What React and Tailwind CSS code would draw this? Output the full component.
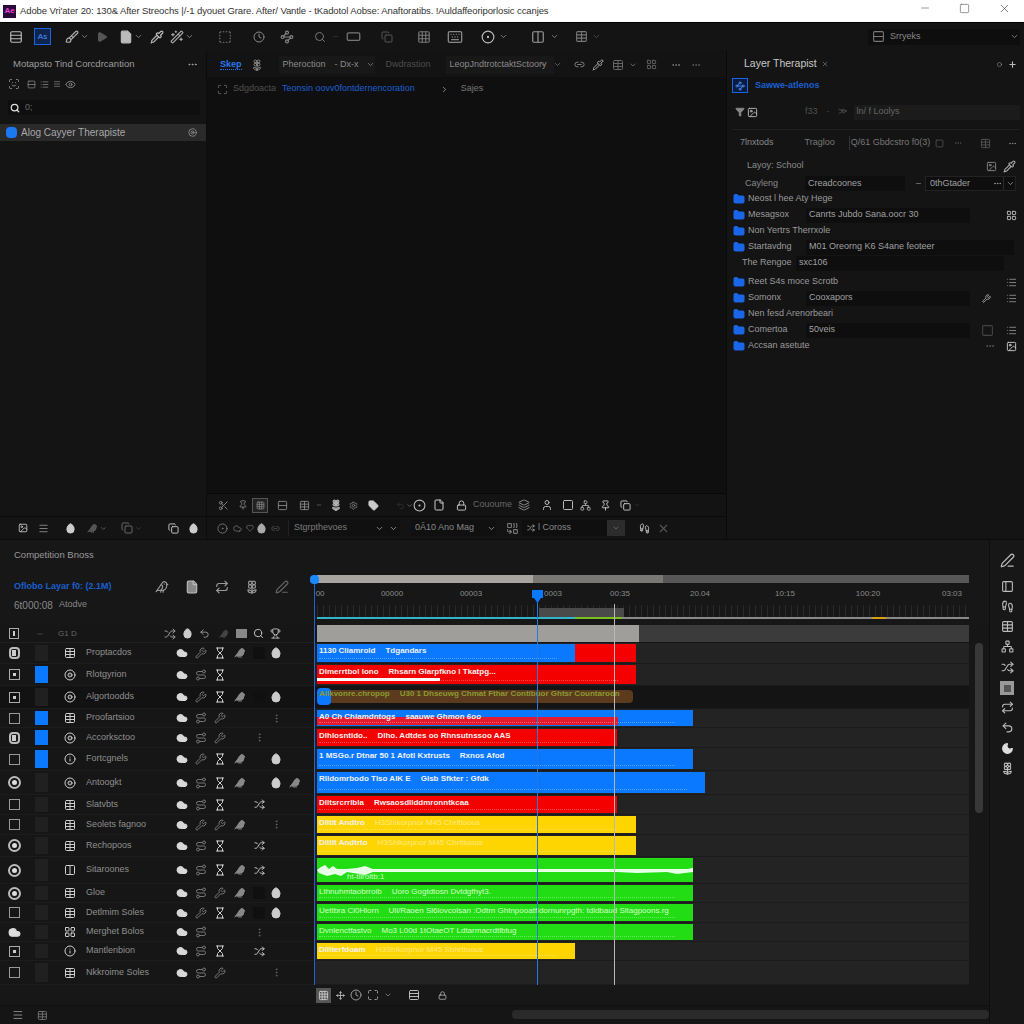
import React from 'react';
import {
  Menu, Rows3, Brush, ChevronDown, Play, File, Pipette, Wand2, SquareDashed, Clock, Waypoints, Search, RectangleHorizontal, Copy, Grid3x3,
  Keyboard, CircleDot, Columns2, Table, Minus, Square, X, MoreHorizontal, ScanFace, Rows2, List, Eye, Filter, Image, ChevronRight, LayoutGrid,
  Maximize, Network, Settings, Plus, Move, Circle, Cloud, Hourglass, Bird, Egg, MoreVertical, Wrench, Route, Shuffle, Heart,
  Disc2, Info, Lock, Trophy, Undo2, Layers, Footprints, Combine, PenLine, PanelLeft, User, Repeat, Pin, Scissors, Moon, Flower2, Folder, Link2, Tag,
} from 'lucide-react';

const rows = [
  { h: 21, check: 'doc', swatch: false, icon: Table, name: 'Proptacdos', icons: 'abcdef', bars: [{ c: 'bg-[#0a78ff]', w: 258 }, { c: 'bg-[#f50000]', w: 61 }], label: ['1130 Cliamrold', 'Tdgandars'] },
  { h: 22, check: 'mini', swatch: true, icon: Disc2, name: 'Rlotgyrion', icons: 'ahc-', bars: [{ c: 'bg-[#f50000]', w: 319 }], label: ['Dlmerrtbol lono', 'Rhsarn Glarpfkno l Tkatpg...'], strip: true },
  { h: 23, check: 'mini', swatch: false, icon: Disc2, name: 'Algortoodds', icons: 'abcdef', dark: true, muddy: true, label: ['Allkvonre.chropop', 'U30 1 Dhseuwg  Chmat Fthar Contibuor  Ghtsr Countaroon'] },
  { h: 19, check: 'box', swatch: true, icon: Table, name: 'Proofartsioo', icons: 'ahb--g', bars: [{ c: 'bg-[#0a78ff]', w: 376 }], label: ['A0 Ch Chlamdntogs', 'saauwe Ghmon 6oo'], stripe: true },
  { h: 20, check: 'doc', swatch: true, icon: Disc2, name: 'Accorksctoo', icons: 'ahb-g', bars: [{ c: 'bg-[#f50000]', w: 300 }], label: ['Dlhlosntldo..', 'Dlho. Adtdes oo  Rhnsutnssoo AAS'] },
  { h: 23, check: 'box', swatch: true, icon: Info, name: 'Fortcgnels', icons: 'abcd-f', bars: [{ c: 'bg-[#0a78ff]', w: 376 }], label: ['1 MSGo.r Dtnar 50 1 Afotl Kxtrusts', 'Rxnos Afod'] },
  { h: 24, check: 'radio', swatch: false, icon: Disc2, name: 'Antoogkt', icons: 'ahcd-fd', bars: [{ c: 'bg-[#0a78ff]', w: 388 }], label: ['Rlldomrbodo  Tlso AIK E', 'Glsb Sfkter : Gfdk'] },
  { h: 20, check: 'box', swatch: false, icon: Table, name: 'Slatvbts', icons: 'ahc-i', bars: [{ c: 'bg-[#f50000]', w: 300 }], label: ['Dlltsrcrrlbla', 'Rwsaosdllddmronntkcaa'] },
  { h: 20, check: 'box', swatch: false, icon: Table, name: 'Seolets fagnoo', icons: 'abbd-g', bars: [{ c: 'bg-[#ffd500]', w: 319 }], label: ['Dlltlt Andtro', 'H3Shlkorpnor   M45 Chrlttoous'] },
  { h: 22, check: 'radio', swatch: false, icon: Table, name: 'Rechopoos', icons: 'ahc-i', bars: [{ c: 'bg-[#ffd500]', w: 319 }], label: ['Dlltlt Andtrto', 'H3Shlkorpnor   M45 Chrlttoous'] },
  { h: 27, check: 'radio', swatch: false, icon: Columns2, name: 'Sitaroones', icons: 'ahcdi', bars: [{ c: 'bg-[#22dd14]', w: 376 }], wave: true },
  { h: 19, check: 'radio', swatch: false, icon: Table, name: 'Gloe', icons: 'ahbdef', bars: [{ c: 'bg-[#22dd14]', w: 376 }], label: ['Lthnuhmtaobrroib', 'Uoro Gogtdtosn  Dvtdgfhyt3.'], thin: true },
  { h: 20, check: 'box', swatch: false, icon: Table, name: 'Detlmim Soles', icons: 'abcdef', bars: [{ c: 'bg-[#22dd14]', w: 376 }], label: ['Uettbra Cl0Hlorn', 'Ull/Raoen Sl6lovcolsan :Odtrn Ghtnpooatfldornunrpgth: tdldbaud Sltagpoons.rg'], thin: true },
  { h: 19, check: 'cloud', swatch: false, icon: LayoutGrid, name: 'Merghet Bolos', icons: 'ah--g', bars: [{ c: 'bg-[#22dd14]', w: 376 }], label: ['Dvnlenctfastvo', 'Mo3 L00d  1tOtaeOT Ldtarmacrdtlbtug'], thin: true },
  { h: 19, check: 'mini', swatch: false, icon: Info, name: 'Mantlenbion', icons: 'ahc-i', bars: [{ c: 'bg-[#ffd500]', w: 258 }], label: ['Dlllterfdoam', 'H3Shlkorpnor   M45 Sbhrttoous'] },
  { h: 24, check: 'box', swatch: false, icon: Table, name: 'Nkkroime Soles', icons: 'ahb--g', none: true },
];

const glyphs = {
  a: <Cloud size={12} className="text-[#d8d8d8] fill-[#d8d8d8]" />,
  b: <Wrench size={12} className="text-[#777]" />,
  h: <Route size={12} className="text-[#777]" />,
  c: <Hourglass size={12} className="text-[#cfcfcf]" />,
  d: <Bird size={12} className="text-[#888] fill-[#888]" />,
  e: <span className="w-3 h-3 bg-[#101010]" />,
  f: <Egg size={12} className="text-[#ccc] fill-[#ccc]" />,
  g: <MoreVertical size={11} className="text-[#666]" />,
  i: <Shuffle size={11} className="text-[#cfcfcf]" />,
};

function Check({ type }) {
  if (type === 'radio') return <span className="w-[13px] h-[13px] rounded-full border-2 border-[#bbb] flex items-center justify-center"><span className="w-[5px] h-[5px] rounded-full bg-[#ddd]" /></span>;
  if (type === 'cloud') return <Cloud size={13} className="text-[#ddd] fill-[#ddd]" />;
  if (type === 'doc') return <span className="w-[11px] h-[12px] rounded-sm border-2 border-[#bbb] flex items-center justify-center"><span className="w-[4px] h-[6px] bg-[#ccc]" /></span>;
  if (type === 'mini') return <span className="w-[11px] h-[11px] border border-[#aaa] flex items-center justify-center"><span className="w-[3px] h-[3px] bg-[#ccc]" /></span>;
  return <span className="w-[11px] h-[11px] border border-[#999]" />;
}

function LayerCell({ row }) {
  const Icon = row.icon;
  const cells = [...row.icons.padEnd(7, '-')];
  return (
    <div className={`w-[314px] shrink-0 h-full grid grid-cols-[28px_26px_32px_87px_18px_19px_20px_20px_18px_16px_22px_8px] items-center ${row.dark ? 'bg-[#121212]' : 'bg-[#161616]'} border-b border-[#1c1c1c]`}>
      <div className="flex justify-center"><Check type={row.check} /></div>
      <div className="flex justify-center h-full py-[2px]">
        <span className={`w-[13px] h-full ${row.swatch ? 'bg-[#0a78ff]' : 'bg-[#202020]'}`} />
      </div>
      <div className="flex justify-center"><Icon size={12} className="text-[#cfcfcf]" /></div>
      <span className="text-[9px] text-[#8f8f8f] truncate">{row.name}</span>
      {cells.map((c, i) => (
        <div key={i} className="flex justify-center">{glyphs[c]}</div>
      ))}
      <span />
    </div>
  );
}

function Track({ row }) {
  return (
    <div className={`grow h-full pl-[3px] py-[1px] pr-[5px] ${row.dark ? 'bg-[#141414]' : 'bg-[#232323]'} border-b border-[#1b1b1b]`}>
      <div className="h-full relative flex">
        {row.bars && row.bars.map((b, i) => (
          <div key={i} className={`${b.c} h-full`} style={{ width: b.w }} />
        ))}
        {row.muddy && (
          <div className="w-[316px] h-[13px] mt-[3px] bg-[#5c3a1e] rounded-sm" />
        )}
        {row.stripe && <div className="absolute left-0 top-[7px] w-[301px] h-[8px] bg-[#e51a2e]" />}
        {row.strip && <div className="absolute left-0 top-[13px] w-[123px] h-[3px] bg-white" />}
        {row.muddy && <div className="absolute left-0 top-[1px] w-[14px] h-[17px] bg-[#0a78ff] rounded-sm" />}
        {row.wave && (
          <svg className="absolute left-0 top-[6px]" width="376" height="16" viewBox="0 0 376 16">
            <path d="M0 6 L4 3 L8 1 L12 5 L16 2 L20 5 L30 5 L40 4 L48 2 L56 5 L370 5 L376 4 L376 8 L360 10 L350 8 L320 9 L300 8 L56 8 L48 11 L30 8 L24 12 L18 10 L10 12 L2 9 Z" fill="#e8ffe8" />
          </svg>
        )}
        {row.bars && !row.wave && (
          <span className="absolute left-[2px] bottom-[3px] border-b border-dotted border-white/30" style={{ width: row.bars[0].w - 20 }} />
        )}
        {row.label && (
          <div className={`absolute left-[2px] top-[1px] flex gap-[10px] whitespace-nowrap text-[8px] font-bold leading-[12px] ${row.muddy ? 'text-[#8a9a30]' : row.thin ? 'text-[#d5ffc8] font-normal' : 'text-[#f2f2f2]'}`}>
            <span>{row.label[0]}</span>
            <span className={row.bars && row.bars[0].c === 'bg-[#ffd500]' ? 'text-[#ffe98a] font-normal' : ''}>{row.label[1]}</span>
          </div>
        )}
        {row.wave && <span className="absolute left-[30px] top-[13px] text-[8px] text-[#c8ffc0]">ht-tllroltb:1</span>}
      </div>
    </div>
  );
}

function Field({ blue, label, value, wide, right, dim }) {
  return (
    <div className="flex items-center h-[16px] pl-[6px] pr-[8px] gap-[3px]">
      {blue ? <Folder size={12} className="text-[#1a66e8] fill-[#1a66e8] shrink-0" /> : <span className="w-[12px] shrink-0" />}
      <span className={`text-[9px] whitespace-nowrap ${value ? 'w-[55px]' : ''} ${dim ? 'text-[#777]' : 'text-[#9a9a9a]'} ${blue ? '' : '-ml-[10px] pl-[4px]'}`}>{label}</span>
      {value && (
        <span className={`h-[15px] flex items-center px-[3px] text-[9px] text-[#a0a0a0] bg-[#0e0e0e] ${wide ? 'w-[208px]' : 'w-[164px]'}`}>{value}</span>
      )}
      <span className="grow" />
      {right}
    </div>
  );
}

export default function App() {
  return (
    <div className="w-[1024px] h-[1024px] overflow-hidden flex flex-col bg-[#151515] font-['Liberation_Sans',sans-serif] text-[#a0a0a0]">
      {/* title bar */}
      <div className="h-[23px] shrink-0 bg-white flex items-center pl-[3px] border-b border-black">
        <span className="w-[13px] h-[13px] bg-[#2a0a3a] text-[#f040d0] text-[8px] font-bold flex items-center justify-center">Ae</span>
        <span className="ml-[4px] text-[9.5px] tracking-[-0.1px] text-[#333] whitespace-nowrap">Adobe Vri'ater 20: 130&amp; After Streochs |/-1 dyouet Grare. After/ Vantle - tKadotol Aobse: Anaftoratibs. !Auldaffeoriporlosic ccanjes</span>
        <span className="grow" />
        <Minus size={12} strokeWidth={1.2} className="text-[#555] mr-[28px] -mt-[6px]" />
        <Square size={11} strokeWidth={1.2} className="text-[#444] mr-[28px] -mt-[6px]" />
        <X size={13} strokeWidth={1.2} className="text-[#444] mr-[13px] -mt-[6px]" />
      </div>

      {/* main toolbar */}
      <div className="h-[27px] shrink-0 bg-[#141414] flex items-center pl-[9px] text-[#9a9a9a]">
        <Rows3 size={14} className="text-[#bbb]" />
        <span className="ml-[11px] w-[17px] h-[17px] border border-[#1a66e8] bg-[#10254d] text-[#4d8fff] text-[8px] flex items-center justify-center">As</span>
        <Brush size={14} className="ml-[14px] text-[#aaa]" />
        <ChevronDown size={9} className="ml-[1px]" />
        <Play size={12} className="ml-[7px] text-[#555] fill-[#555]" />
        <File size={14} className="ml-[11px] text-[#bbb] fill-[#bbb]" />
        <ChevronDown size={9} className="ml-[1px]" />
        <Pipette size={14} className="ml-[7px] text-[#bbb]" />
        <Wand2 size={14} className="ml-[6px] text-[#aaa]" />
        <ChevronDown size={9} className="ml-[1px]" />
        <SquareDashed size={14} className="ml-[24px] text-[#777]" />
        <Clock size={12} className="ml-[21px] text-[#888]" />
        <Waypoints size={14} className="ml-[15px] text-[#888]" />
        <Search size={12} className="ml-[20px] text-[#777]" />
        <Minus size={7} className="ml-[6px] text-[#444]" />
        <RectangleHorizontal size={15} className="ml-[7px] text-[#777]" />
        <Copy size={12} className="ml-[20px] text-[#555]" />
        <Grid3x3 size={14} className="ml-[24px] text-[#777]" />
        <Keyboard size={16} className="ml-[16px] text-[#888]" />
        <CircleDot size={14} className="ml-[18px] text-[#bbb]" />
        <ChevronDown size={9} className="ml-[4px]" />
        <Columns2 size={14} className="ml-[23px] text-[#999]" />
        <ChevronDown size={9} className="ml-[5px]" />
        <Table size={13} className="ml-[16px] text-[#777]" />
        <ChevronDown size={9} className="ml-[4px] text-[#555]" />
        <span className="grow" />
        <div className="w-[152px] h-[16px] mr-[4px] bg-[#0e0e0e] flex items-center pl-[4px]">
          <Rows2 size={13} className="text-[#777]" />
          <span className="ml-[5px] text-[9px] text-[#888]">Srryeks</span>
          <span className="grow" />
          <ChevronDown size={9} className="mr-[1px]" />
        </div>
      </div>

      {/* workspace */}
      <div className="h-[490px] shrink-0 flex border-b border-[#0b0b0b]">
        {/* project panel */}
        <div className="w-[207px] shrink-0 flex flex-col bg-[#141414] border-r border-[#0c0c0c]">
          <div className="h-[27px] flex items-center pl-[13px] pr-[8px] pt-[2px]">
            <span className="text-[9.5px] text-[#9c9c9c] whitespace-nowrap">Motapsto Tind Corcdrcantion</span>
            <span className="grow" />
            <MoreHorizontal size={11} className="text-[#aaa]" />
          </div>
          <div className="h-[12px] mt-[1px] flex items-center gap-[4px] pl-[8px] text-[#888]">
            <ScanFace size={12} />
            <Rows2 size={9} className="ml-[3px]" />
            <List size={9} />
            <Menu size={8} />
            <Eye size={11} />
          </div>
          <div className="mt-[10px] ml-[8px] w-[192px] h-[15px] bg-[#0f0f0f] flex items-center pl-[2px]">
            <Search size={10} strokeWidth={3} className="text-[#ddd]" />
            <span className="ml-[5px] text-[9px] text-[#666]">0;</span>
          </div>
          <div className="mt-[9px] h-[17px] bg-[#2a2a2a] flex items-center pl-[6px] pr-[9px]">
            <span className="w-[11px] h-[11px] rounded-sm bg-[#1a78f0]" />
            <span className="ml-[4px] text-[10px] text-[#a8a8a8] whitespace-nowrap">Alog Cayyer Therapiste</span>
            <span className="grow" />
            <Disc2 size={9} className="text-[#999]" />
          </div>
          <div className="grow" />
          <div className="h-[23px] border-t border-[#0c0c0c] flex items-center pl-[18px] text-[#888]">
            <Image size={10} className="text-[#ccc]" />
            <Menu size={11} className="ml-[10px]" />
            <Egg size={11} className="ml-[16px] text-[#ccc] fill-[#ccc]" />
            <Bird size={11} className="ml-[11px] text-[#555] fill-[#555]" />
            <ChevronDown size={7} className="ml-[2px]" />
            <Copy size={12} className="ml-[14px] text-[#666]" />
            <ChevronDown size={7} className="ml-[2px] text-[#555]" />
            <Copy size={11} className="ml-[26px] text-[#ccc]" />
            <Egg size={11} className="ml-[9px] text-[#ccc] fill-[#ccc]" />
          </div>
        </div>

        {/* composition panel */}
        <div className="w-[520px] shrink-0 flex flex-col bg-[#0f0f0f] border-r border-[#0a0a0a]">
          <div className="h-[27px] bg-[#131313] flex items-center pl-[13px] pt-[2px] text-[9px]">
            <span className="text-[#2a78ee] font-bold border-b border-dotted border-[#2a78ee] leading-[10px]">Skep</span>
            <Flower2 size={12} className="ml-[9px] text-[#888]" />
            <div className="ml-[16px] w-[96px] h-[18px] bg-[#181818] flex items-center pl-[4px] text-[#8a8a8a]">
              <span>Pheroction</span>
              <span className="ml-[9px]">- Dx-x</span>
              <ChevronDown size={9} className="ml-[7px]" />
            </div>
            <span className="ml-[11px] text-[#4c4c4c] w-[52px]">Dwdrastion</span>
            <span className="ml-[8px] h-[18px] w-[108px] bg-[#181818] flex items-center pl-[4px] text-[#8a8a8a] whitespace-nowrap overflow-hidden">LeopJndtrotctaktSctoory</span>
            <ChevronDown size={9} className="ml-[-15px] text-[#777]" />
            <ChevronDown size={9} className="ml-[5px] text-[#777]" />
            <Link2 size={11} className="ml-[12px] text-[#888]" />
            <Pipette size={12} className="ml-[7px] text-[#aaa]" />
            <Table size={12} className="ml-[8px] text-[#666]" />
            <ChevronDown size={8} className="ml-[5px] text-[#888]" />
            <LayoutGrid size={11} className="ml-[9px] text-[#666]" />
            <MoreHorizontal size={10} className="ml-[14px] text-[#888]" />
            <MoreHorizontal size={10} className="ml-[10px] text-[#666]" />
          </div>
          <div className="h-[24px] flex items-center pl-[10px] text-[9px] whitespace-nowrap">
            <Maximize size={11} className="text-[#666]" />
            <span className="ml-[5px] text-[#4f4f4f]">Sdgdoacta</span>
            <span className="ml-[6px] text-[#1a5fd0]">Teonsin oovv0fontdernencoration</span>
            <ChevronRight size={9} className="ml-[25px] text-[#aaa]" />
            <span className="ml-[12px] text-[#777]">Sajes</span>
          </div>
          <div className="grow" />
          <div className="h-[23px] bg-[#131313] border-t border-[#080808] flex items-center pl-[11px] text-[#888]">
            <Scissors size={11} />
            <Pin size={10} className="ml-[9px]" />
            <span className="ml-[4px] w-[16px] h-[15px] border border-[#555] bg-[#222] flex items-center justify-center"><Grid3x3 size={9} /></span>
            <Rows2 size={11} className="ml-[9px]" />
            <Table size={11} className="ml-[11px]" />
            <Minus size={6} className="ml-[6px]" />
            <Flower2 size={12} className="ml-[8px] text-[#bbb] fill-[#888]" />
            <Settings size={9} className="ml-[7px]" />
            <Tag size={11} className="ml-[10px] text-[#ccc] fill-[#ccc]" />
            <Undo2 size={9} className="ml-[17px] text-[#333]" />
            <ChevronDown size={7} className="ml-[1px]" />
            <CircleDot size={13} className="text-[#bbb]" />
            <File size={12} className="ml-[7px] text-[#ccc]" />
            <Lock size={11} className="ml-[11px] text-[#ccc]" />
            <span className="ml-[6px] text-[9px] text-[#666]">Cououme</span>
            <Layers size={12} className="ml-[6px]" />
            <User size={12} className="ml-[11px] text-[#bbb]" />
            <Square size={12} className="ml-[9px] text-[#bbb]" />
            <Network size={11} className="ml-[6px] text-[#aaa]" />
            <Pin size={11} className="ml-[9px] text-[#ccc]" />
            <Copy size={11} className="ml-[9px] text-[#ccc]" />
            <ChevronDown size={6} className="ml-[3px] text-[#444]" />
          </div>
          <div className="h-[23px] bg-[#131313] border-t border-[#0a0a0a] flex items-center pl-[10px] text-[#777] text-[9px]">
            <CircleDot size={11} />
            <Cloud size={9} className="ml-[5px]" />
            <Heart size={8} className="ml-[4px]" />
            <Egg size={11} className="ml-[2px] text-[#aaa] fill-[#aaa]" />
            <Link2 size={9} className="ml-[4px] text-[#555]" />
            <div className="ml-[8px] w-[112px] h-[16px] bg-[#101010] border-l border-[#222] flex items-center pl-[5px]">
              <span className="text-[#7a7a7a]">Stgrpthevoes</span>
              <span className="grow" />
              <ChevronDown size={9} className="text-[#aaa]" />
              <ChevronDown size={9} className="ml-[5px] mr-[2px] text-[#aaa]" />
            </div>
            <div className="ml-[11px] w-[85px] h-[16px] bg-[#101010] flex items-center pl-[4px]">
              <span className="text-[#888] whitespace-nowrap">0Ã10 Ano Mag</span>
              <span className="grow" />
              <ChevronDown size={9} className="text-[#aaa]" />
            </div>
            <Combine size={13} className="ml-[10px]" />
            <div className="ml-[3px] w-[103px] h-[16px] bg-[#0f0f0f] flex items-center pl-[5px]">
              <Shuffle size={8} className="text-[#bbb]" />
              <span className="ml-[3px] text-[#888]">l Coross</span>
              <span className="grow" />
              <span className="w-[18px] h-[16px] bg-[#2c2c2c] flex items-center justify-center"><ChevronDown size={8} /></span>
            </div>
            <Footprints size={11} className="ml-[14px] text-[#ccc]" />
            <X size={13} className="ml-[7px] text-[#555]" />
          </div>
        </div>

        {/* properties panel */}
        <div className="grow flex flex-col bg-[#141414]">
          <div className="h-[25px] flex items-center pl-[17px] pr-[8px] pt-[3px]">
            <span className="text-[10.5px] text-[#c8c8c8]">Layer Therapist</span>
            <X size={8} className="ml-[4px] text-[#777]" />
            <span className="grow" />
            <Circle size={5} className="text-[#bbb]" />
            <Plus size={9} strokeWidth={3} className="ml-[6px] text-[#bbb]" />
          </div>
          <div className="h-[21px] flex items-center pl-[5px]">
            <span className="w-[16px] h-[15px] border border-[#1a66e8] bg-[#0a1c3e] flex items-center justify-center"><Waypoints size={10} className="text-[#4d8fff]" /></span>
            <span className="ml-[7px] text-[9px] font-bold text-[#1a5fd0]">Sawwe-atlenos</span>
          </div>
          <div className="h-[24px] mt-[4px] flex items-center pl-[8px] pr-[5px]">
            <Filter size={10} className="text-[#888] fill-[#888]" />
            <Image size={11} className="ml-[2px] text-[#bbb]" />
            <span className="ml-[47px] text-[9px] text-[#4f4f4f]">f33</span>
            <span className="ml-[9px] text-[9px] text-[#3f3f3f]">-</span>
            <span className="ml-[8px] text-[9px] text-[#4f4f4f]">&#8811;</span>
            <span className="ml-[7px] grow h-[15px] bg-[#1b1b1b] flex items-center pl-[3px] text-[9px] text-[#666]">ln/ f Loolys</span>
          </div>
          <div className="h-[27px] mt-[5px] mx-[5px] border-t border-[#202020] flex items-center text-[9px] pl-[8px] pr-[3px]">
            <span className="text-[#888]">7lnxtods</span>
            <span className="ml-[31px] text-[#777]">Tragloo</span>
            <span className="ml-[14px] text-[#777] border-l border-[#333] pl-[1px] whitespace-nowrap">Q/61 Gbdcstro f0(3)</span>
            <Square size={9} className="ml-[5px] text-[#555]" />
            <MoreHorizontal size={8} className="ml-[10px] text-[#555]" />
            <Table size={11} className="ml-[18px] text-[#555]" />
            <span className="grow" />
            <MoreHorizontal size={9} className="text-[#888]" />
          </div>
          <div className="h-[20px] flex items-center pl-[20px] pr-[9px]">
            <span className="text-[9px] text-[#8a8a8a]">Layoy: School</span>
            <span className="grow" />
            <Image size={11} className="text-[#888]" />
            <Pipette size={13} className="ml-[6px] text-[#aaa]" />
          </div>
          <div className="h-[15px] flex items-center pl-[18px] pr-[9px] text-[9px]">
            <span className="w-[60px] text-[#8a8a8a]">Cayleng</span>
            <span className="h-[15px] w-[100px] bg-[#0e0e0e] flex items-center pl-[3px]">Creadcoones</span>
            <Minus size={7} className="ml-[10px]" />
            <div className="ml-[3px] h-[15px] grow bg-[#0e0e0e] border border-[#222] flex items-center pl-[4px]">
              <span className="whitespace-nowrap">0thGtader</span>
              <span className="grow" />
              <MoreHorizontal size={9} className="mr-[1px]" />
              <span className="h-full border-l border-[#2a2a2a] pl-[2px] flex items-center"><ChevronDown size={9} /></span>
            </div>
          </div>
          <Field blue label="Neost l hee Aty Hege" />
          <Field blue label="Mesagsox" value="Canrts Jubdo Sana.oocr 30" right={<LayoutGrid size={11} className="text-[#bbb]" />} />
          <Field blue label="Non Yertrs Therrxole" />
          <Field blue label="Startavdng" value="M01 Oreorng K6 S4ane feoteer" wide />
          <Field label="The Rengoe" value="sxc106" wide />
          <div className="h-[3px]" />
          <Field blue label="Reet S4s moce Scrotb" right={<List size={11} className="text-[#888]" />} />
          <Field blue label="Somonx" value="Cooxapors" right={<><Wrench size={9} className="text-[#bbb] mr-[12px]" /><List size={11} className="text-[#888]" /></>} />
          <Field blue label="Nen fesd Arenorbeari" />
          <Field blue label="Comertoa" value="50veis" right={<><Square size={13} className="text-[#444] mr-[9px]" /><List size={11} className="text-[#888]" /></>} />
          <Field blue label="Accsan asetute" right={<><MoreHorizontal size={10} className="text-[#666] mr-[8px]" /><Image size={11} className="text-[#ccc]" /></>} />
        </div>
      </div>

      {/* timeline */}
      <div className="grow flex bg-[#171717]">
        <div className="w-[989px] shrink-0 flex flex-col relative">
          <div className="h-[26px] flex items-center pl-[14px] pt-[4px]">
            <span className="text-[9.5px] text-[#999]">Competition Bnoss</span>
          </div>
          <div className="h-[59px] flex">
            <div className="w-[314px] shrink-0 pl-[14px] pt-[12px] flex">
              <div className="w-[141px]">
                <div className="text-[9px] font-bold text-[#1a5fd0] whitespace-nowrap h-[18px] flex items-center">Oflobo Layar f0: (2.1M)</div>
                <div className="text-[10px] text-[#888] whitespace-nowrap h-[18px] flex items-center">6t000:08<span className="ml-[6px] text-[9px]">Atodve</span></div>
              </div>
              <div className="flex gap-[16px] pt-[2px] text-[#999]">
                <Bird size={14} />
                <File size={14} className="text-[#bbb] fill-[#888]" />
                <Repeat size={14} />
                <Flower2 size={14} />
                <PenLine size={14} className="text-[#666]" />
              </div>
            </div>
            <div className="grow pl-[3px] pr-[20px] flex flex-col">
              <div className="h-[8px] mt-[9px] flex">
                <span className="w-[216px] bg-[#a8a5a0]" />
                <span className="w-[130px] bg-[#7a7874]" />
                <span className="grow bg-[#575757]" />
              </div>
              <div className="h-[22px] flex items-center text-[8px] text-[#8a8a8a]">
                <span className="w-[30px] text-center -ml-[13px]">:00</span>
                <span className="w-[30px] text-center ml-[43px]">00000</span>
                <span className="w-[30px] text-center ml-[49px]">00003</span>
                <span className="w-[30px] text-center ml-[52px]">0003</span>
                <span className="w-[30px] text-center ml-[37px]">00:35</span>
                <span className="w-[30px] text-center ml-[50px]">20.04</span>
                <span className="w-[30px] text-center ml-[55px]">10:15</span>
                <span className="w-[30px] text-center ml-[53px]">100:20</span>
                <span className="w-[30px] text-center ml-[54px]">03:03</span>
              </div>
              <div className="h-[12px] bg-[repeating-linear-gradient(90deg,#2a2a2a_0,#2a2a2a_1px,transparent_1px,transparent_6px)]" />
              <div className="h-[2px] flex">
                <span className="w-[258px] bg-[#31b4c8]" />
                <span className="w-[47px] bg-[#7bc020]" />
                <span className="w-[250px] bg-[#8a8a8a]" />
                <span className="w-[14px] bg-[#d8a010]" />
                <span className="grow bg-[#8a8a8a]" />
              </div>
            </div>
          </div>
          {/* header row */}
          <div className="h-[18px] flex">
            <div className="w-[314px] shrink-0 flex items-center pl-[9px] pr-[8px] text-[#999] bg-[#161616] border-b border-[#202020]">
              <span className="w-[10px] h-[11px] border border-[#aaa] flex items-center justify-center"><span className="w-[2px] h-[5px] bg-[#ccc]" /></span>
              <Minus size={8} className="ml-[17px] text-[#555]" />
              <span className="ml-[14px] text-[8px] text-[#666]">G1 D</span>
              <Shuffle size={12} className="ml-[87px]" />
              <Egg size={11} className="ml-[6px] text-[#ccc] fill-[#ccc]" />
              <Undo2 size={11} className="ml-[6px]" />
              <Bird size={10} className="ml-[9px] text-[#444] fill-[#444]" />
              <span className="ml-[7px] w-[11px] h-[9px] bg-[#888]" />
              <Search size={11} className="ml-[6px] text-[#ccc]" />
              <Trophy size={11} className="ml-[6px] text-[#bbb]" />
            </div>
            <div className="grow pl-[3px] pr-[20px] bg-[#161616] pb-[1px]">
              <div className="h-full flex">
                <span className="w-[322px] bg-[#a09e9b]" />
                <span className="grow bg-[#3b3b3b]" />
              </div>
            </div>
          </div>
          {/* layer rows */}
          {rows.map((row, i) => (
            <div key={i} className="flex pr-[20px] relative shrink-0" style={{ height: row.h }}>
              <LayerCell row={row} />
              <Track row={row} />
            </div>
          ))}
          {/* track toolbar */}
          <div className="h-[20px] shrink-0 flex items-center pl-[316px] text-[#999]">
            <span className="w-[15px] h-[15px] bg-[#555] flex items-center justify-center"><Grid3x3 size={11} className="text-[#ccc]" /></span>
            <Move size={9} className="ml-[5px] text-[#ccc]" />
            <Clock size={12} className="ml-[5px]" />
            <Maximize size={12} className="ml-[5px]" />
            <ChevronDown size={8} className="ml-[5px]" />
            <Rows3 size={12} className="ml-[16px] text-[#bbb]" />
            <Lock size={9} className="ml-[18px] text-[#bbb]" />
          </div>
          <div className="grow flex items-center pl-[12px] bg-[#151515] border-t border-[#101010]">
            <Menu size={12} className="text-[#888]" />
            <Table size={11} className="ml-[13px] text-[#777]" />
            <span className="ml-[464px] w-[488px] h-[9px] rounded-sm bg-[#2a2a2a] -mt-[1px]" />
          </div>

          {/* playheads and knobs lie over the tracks */}
          <span className="absolute left-[314px] top-[39px] bottom-[39px] w-[1px] bg-[#1a66d8]" />
          <span className="absolute left-[310px] top-[35px] w-[9px] h-[9px] rounded-sm bg-[#1a88ff]" />
          <span className="absolute left-[539px] top-[68px] w-[85px] h-[9px] bg-[#4a4a4a]" />
          <span className="absolute left-[537px] top-[60px] bottom-[39px] w-[1px] bg-[#2a78e8]" />
          <span className="absolute left-[532px] top-[50px] w-[11px] h-[8px] bg-[#0a78ff]" />
          <span className="absolute left-[534px] top-[58px] w-[7px] h-[5px] bg-[#0a78ff] [clip-path:polygon(0_0,100%_0,50%_100%)]" />
          <span className="absolute left-[614px] top-[64px] bottom-[39px] w-[1px] bg-[#b8b8b8]" />
          <span className="absolute left-[975px] top-[103px] w-[8px] h-[170px] rounded-sm bg-[#383838]" />
        </div>

        {/* right tool strip */}
        <div className="grow border-l border-[#0e0e0e] flex flex-col items-center pt-[13px] text-[#bbb]">
          <PenLine size={15} />
          <PanelLeft size={13} className="mt-[12px]" />
          <Footprints size={13} className="mt-[7px]" />
          <Table size={13} className="mt-[7px]" />
          <Network size={13} className="mt-[7px]" />
          <Shuffle size={13} className="mt-[8px]" />
          <span className="mt-[7px] w-[14px] h-[14px] bg-[#999] flex items-center justify-center"><span className="w-[7px] h-[7px] bg-[#555]" /></span>
          <Repeat size={13} className="mt-[6px]" />
          <Undo2 size={13} className="mt-[7px]" />
          <Moon size={13} className="mt-[8px] text-[#ddd] fill-[#ddd]" />
          <Flower2 size={13} className="mt-[7px]" />
        </div>
      </div>
    </div>
  );
}
